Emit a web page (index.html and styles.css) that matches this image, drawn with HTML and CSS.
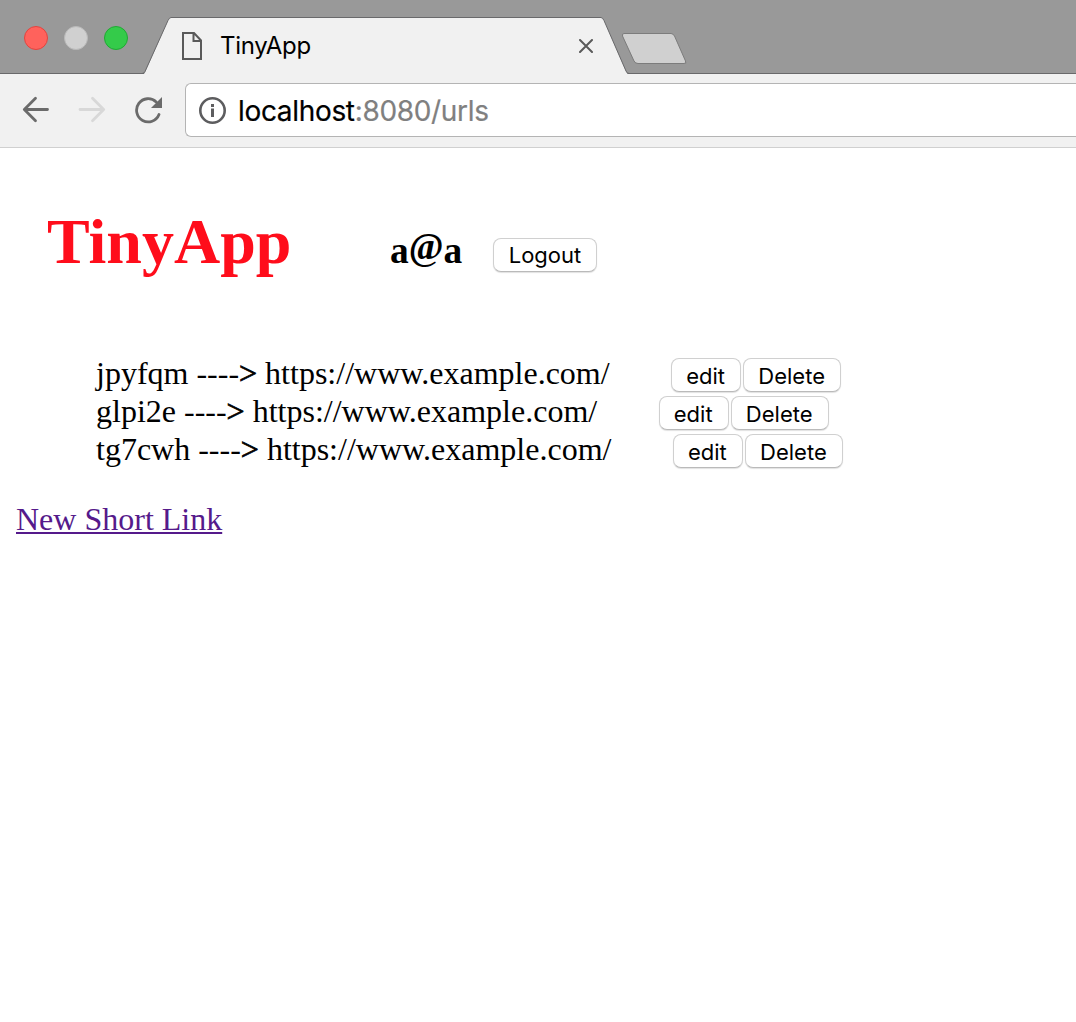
FILE: index.html
```html
<!DOCTYPE html>
<html lang="en">
<head>
<meta charset="utf-8">
<title>TinyApp</title>
<link rel="stylesheet" href="styles.css">
</head>
<body>
<header class="browser">
  <div class="tabstrip">
    <div class="lights">
      <span class="light light-close"></span>
      <span class="light light-min"></span>
      <span class="light light-zoom"></span>
    </div>
    <div class="tab">
      <svg class="tab-shape" width="488" height="58" viewBox="0 0 488 58">
        <path d="M0 58V57.500H1.500Q3 57.500 4 55.500L27 3.500Q28.500 .5 30 .5H460Q461.500 .5 463 3.500L485 54.500Q486.500 57.500 488 57.500V58Z" fill="#f1f1f1"/>
        <path d="M0 56.500H1Q3 56.500 4 54.500L27 3.500Q28.500 .5 30 .5H460Q461.500 .5 463 3.500L485 54Q486 56.500 488 56.500" fill="none" stroke="#69696b"/>
      </svg>
      <svg class="tab-page" width="20" height="28" viewBox="0 0 20 28">
        <path d="M1 1H12L19 8.500V27H1Z M11.500 1V9H19" fill="none" stroke="#5a5a5a" stroke-width="2"/>
      </svg>
      <span class="tab-title">TinyApp</span>
      <svg class="tab-close" width="14" height="14" viewBox="0 0 14 14">
        <path d="M1 1L13 13M13 1L1 13" stroke="#5a5a5a" stroke-width="2" stroke-linecap="round"/>
      </svg>
    </div>
    <svg class="new-tab" width="68" height="34" viewBox="0 0 68 34">
      <path d="M4 2H51Q53 2 54.500 4.500L66 30Q67 32 65 32H18Q15.500 32 14 29.500L2.500 4Q2 2 4 2Z" fill="#777" opacity=".45"/>
      <path d="M4 1.500H51Q53 1.500 54.500 4L65.500 29Q66.500 31.500 64 31.500H18Q15.500 31.500 14 29L2.500 4Q2 1.500 4 1.500Z" fill="#d0d0d0" stroke="#7c7c7c"/>
    </svg>
  </div>
  <div class="toolbar">
    <svg class="nav" width="28" height="28" viewBox="0 0 28 28">
      <path d="M25.500 13.500H2.500M13.500 2.300L2.300 13.500L13.500 24.700" fill="none" stroke="#6b6b6b" stroke-width="2.800" stroke-linecap="round" stroke-linejoin="round"/>
    </svg>
    <svg class="nav" width="28" height="28" viewBox="0 0 28 28">
      <path d="M2 13.500H25.500M14.500 2.300L25.700 13.500L14.500 24.700" fill="none" stroke="#d8d8d8" stroke-width="2.800" stroke-linecap="round" stroke-linejoin="round"/>
    </svg>
    <svg class="nav" width="28" height="28" viewBox="0 0 28 28">
      <path d="M25 18.500A11.600 11.600 0 1 1 22.200 5.900" fill="none" stroke="#6b6b6b" stroke-width="2.800" stroke-linecap="round"/>
      <path d="M28 1V12H17Z" fill="#6b6b6b"/>
    </svg>
    <div class="omnibox">
      <svg width="28" height="28" viewBox="0 0 28 28">
        <circle cx="14.500" cy="14.500" r="12.200" fill="none" stroke="#5d5d5f" stroke-width="2.600"/>
        <path d="M13 8H16V11H13ZM13 12.500H16V21H13Z" fill="#5d5d5f"/>
      </svg>
      <span class="address">localhost<span class="address-path">:8080/urls</span></span>
    </div>
  </div>
</header>
<main class="page">
  <div class="masthead">
    <h1 class="brand">TinyApp</h1>
    <h3 class="user">a<span class="at">@</span>a</h3>
    <button class="btn btn-logout">Logout</button>
  </div>
  <ul class="urls">
    <li class="url"><span class="url-text">jpyfqm ----<span class="arrow">&gt;</span> https://www.example.com/</span><button class="btn btn-edit">edit</button><button class="btn btn-delete">Delete</button></li>
    <li class="url"><span class="url-text">glpi2e ----<span class="arrow">&gt;</span> https://www.example.com/</span><button class="btn btn-edit">edit</button><button class="btn btn-delete">Delete</button></li>
    <li class="url"><span class="url-text">tg7cwh ----<span class="arrow">&gt;</span> https://www.example.com/</span><button class="btn btn-edit">edit</button><button class="btn btn-delete">Delete</button></li>
  </ul>
  <a class="new-link" href="#">New Short Link</a>
</main>
</body>
</html>
```
FILE: styles.css
```css
* { box-sizing: border-box; }
body {
  margin: 0;
  height: 1022px;
  overflow: hidden;
  background: #fff;
  color: #000;
  font: 32px/38px "Liberation Serif", serif;
}
svg { display: block; flex: none; }

.browser { font-family: Inter, sans-serif; }
.tabstrip {
  display: flex;
  height: 74px;
  background: linear-gradient(#999, #999 73px, #69696b 73px);
}
.lights { display: flex; gap: 16px; padding: 26px 0 0 24px; width: 141px; flex: none; }
.light { width: 24px; height: 24px; border-radius: 50%; border: 1px solid; }
.light-close { background: #ff625c; border-color: #e2443f; }
.light-min { background: #d0d0d0; border-color: #b9b9b9; }
.light-zoom { background: #34cb4a; border-color: #20a934; }
.tab {
  position: relative;
  display: flex;
  align-items: center;
  width: 488px;
  height: 58px;
  margin-top: 17px;
  padding-left: 41px;
  flex: none;
}
.tab-shape { position: absolute; left: 0; top: 0; }
.tab-page { position: relative; }
.tab-title { position: relative; width: 359px; margin-left: 18px; font-size: 24px; letter-spacing: -0.3px; }
.tab-close { position: relative; }
.new-tab { margin: 32px 0 0 -9px; position: relative; }

.toolbar {
  display: flex;
  align-items: center;
  height: 74px;
  padding: 0 0 1px 22px;
  background: #f1f1f1;
  border-bottom: 1px solid #d0d0d0;
}
.nav { margin-right: 28px; }
.omnibox {
  display: flex;
  align-items: center;
  flex: 1;
  height: 54px;
  margin-left: -5px;
  padding-left: 12px;
  background: #fff;
  border: 1px solid #b4b4b4;
  border-right: 0;
  border-radius: 6px 0 0 6px;
}
.address { margin: 2px 0 0 12px; font-size: 28px; letter-spacing: -0.33px; -webkit-text-stroke: .2px; }
.address-path { color: #808080; }

.page { padding: 0 16px; }
.masthead { display: flex; align-items: baseline; height: 210px; padding: 57px 0 0 31px; }
.brand { width: 343px; margin: 0; font-size: 64px; line-height: 74px; color: #ff0d1b; }
.user { width: 103px; margin: 0; font-size: 37.44px; line-height: 42px; }
.at { vertical-align: 4px; line-height: 0; }
.btn {
  flex: none;
  height: 34px;
  padding: 0;
  border: 1px solid #d0d0d0;
  border-bottom-color: #bababa;
  border-radius: 8px;
  background: #fff;
  box-shadow: 0 1px 1px rgba(0, 0, 0, .12);
  color: #000;
  font: 22px/30px Inter, sans-serif;
  letter-spacing: 0;
}
.btn-logout { width: 104px; }
.btn-edit { width: 70px; margin-left: 61.5px; padding: 1px 1px 0 0; }
.btn-delete { width: 98px; margin-left: 2px; padding: 1px 1px 0 0; }
.urls { margin: 0; padding: 0 0 0 80px; list-style: none; }
.url { display: flex; height: 38px; white-space: pre; }
.url-text { line-height: 34px; margin-top: -2px; }
.arrow { -webkit-text-stroke: .8px; }
.new-link { display: inline-block; margin-top: 28px; color: #551a8b; text-underline-offset: 2px; text-decoration-thickness: 2px; }
```
